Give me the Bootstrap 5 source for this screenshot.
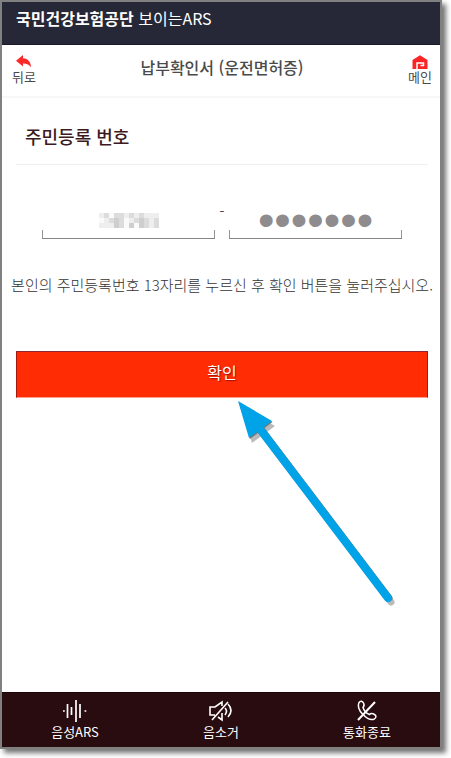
<!DOCTYPE html>
<html lang="ko">
<head>
<meta charset="utf-8">
<meta name="viewport" content="width=device-width, initial-scale=1">
<title>국민건강보험공단 보이는ARS</title>
<link href="https://cdn.jsdelivr.net/npm/bootstrap@5.3.0/dist/css/bootstrap.min.css" rel="stylesheet">
<style>
body{font-family:"Noto Sans CJK KR",sans-serif;background:#fff;color:#444;padding:0 9px 9px 0}
.phone{min-height:calc(100vh - 9px);border:2px solid #808080;background:#fff;box-shadow:4px 4px 5px rgba(0,0,0,.55)}
.top-bar{background:#262837;border-bottom:1px solid #191a27;height:43px;padding:3px 14px 0;font-size:16px;line-height:26px;color:#fff}
.top-bar strong{font-weight:700}
.title-bar{height:53px;border-bottom:2px solid #f7f7f7;padding:9px 8px 0 10px}
.title-bar h1{font-size:16px;line-height:26px;font-weight:500;color:#4a4a4a}
.side-link{font-size:13px;line-height:15px;color:#4a4a4a;font-weight:400}
.side-link svg{margin-top:1px}
.content{padding:0 12px 0 14px}
.section-head{height:67px;padding:25px 9px 0;border-bottom:1px solid #f0eeee;font-size:18px;line-height:26px;font-weight:500;color:#3c1a20}
.id-row{padding:36px 26px 0;gap:4px}
.id-field{height:38px;min-width:0;width:100%;border:0;border-bottom:1px solid #858585;border-radius:0;padding:0;text-align:center;color:#8f8c90;font-family:"Liberation Sans",sans-serif;
background:linear-gradient(#969696,#969696) left bottom/1px 8px no-repeat,linear-gradient(#969696,#969696) right bottom/1px 8px no-repeat}
.id-field.secret{font-size:47px;line-height:36px}
.id-field:focus{outline:0}
.dash{font-size:14px;line-height:20px;width:6px;text-align:center}
.hidden-digits{position:absolute;left:50%;top:12px;margin-left:-30px}
.guide{font-size:15px;line-height:24px;font-weight:300;color:#333;margin:34px -10px 0;text-align:center}
.confirm{height:47px;margin-top:54px}
.confirm .btn{height:100%;border-radius:0;border:1px solid #a5180c;border-top-color:#8a2838;border-bottom-color:#ff9c8c;background:#ff2c04;color:#fff;font-size:16px;line-height:24px;padding:0 0 6px;text-shadow:1px 1px 1px rgba(120,0,0,.7)}
.pointer{position:absolute;left:50%;top:100%;margin-left:12px;pointer-events:none}
.foot-bar{height:55px;background:#290c10;border-top:1px solid #1a0407}
.foot-bar .btn{border:0;border-radius:0;padding:0;color:#fff;font-size:13px;line-height:18px}
.foot-bar svg{display:block;margin:0 auto}
</style>
</head>
<body>
<div class="phone d-flex flex-column">
  <header>
    <div class="top-bar"><strong>국민건강보험공단</strong> 보이는ARS</div>
    <nav class="title-bar d-flex justify-content-between align-items-start">
      <a href="#" class="side-link d-flex flex-column align-items-center text-decoration-none">
        <svg width="16" height="14" viewBox="0 0 16 14" aria-hidden="true"><path d="M0 5.800 7 0v3.200c5 .2 8 3.800 8 9.300-1.500-2.600-4-3.900-8-3.900v3z" fill="#fb2a2a"/></svg>
        뒤로</a>
      <h1 class="mb-0">납부확인서 (운전면허증)</h1>
      <a href="#" class="side-link d-flex flex-column align-items-center text-decoration-none">
        <svg width="16" height="14" viewBox="0 0 16 14" aria-hidden="true"><path d="M.5 14V5L8 .3 15.500 5v9z" fill="#fb2525"/><path d="M5 14V8h6.500v2.500H8.500" fill="none" stroke="#fff" stroke-width="1.500"/></svg>
        메인</a>
    </nav>
  </header>
  <main class="content flex-grow-1">
    <h2 class="section-head mb-0">주민등록 번호</h2>
    <div class="id-row d-flex">
      <div class="col position-relative">
        <input type="text" class="id-field d-block" inputmode="numeric" aria-label="주민등록번호 앞 6자리">
        <svg class="hidden-digits" width="60" height="15" viewBox="0 0 12 3" shape-rendering="crispEdges" aria-hidden="true">
          <path fill="#eee" d="M0 0h12v3H0z"/>
          <path fill="#dcdcdc" d="M1 0h1v1H1zM3 0h2v1H3zM6 0h1v1H6zM8 0h1v1H8zM2 1h2v1H2zM4 1h1v2H4zM7 1h1v1H7zM9 1h1v1H9zM11 1h1v2h-1zM9 2h1v1H9z"/>
          <path fill="#cecece" d="M3 1h1v2H3zM8 1h1v1H8zM6 2h1v1H6zM8 2h1v1H8z"/>
          <path fill="#fafafa" d="M0 1h1v1H0zM2 0h1v1H2zM5 1h1v2H5zM7 2h1v1H7z"/>
        </svg>
      </div>
      <span class="dash">-</span>
      <div class="col">
        <input type="password" class="id-field secret d-block" value="0000000" maxlength="7" inputmode="numeric" aria-label="주민등록번호 뒤 7자리">
      </div>
    </div>
    <p class="guide">본인의 주민등록번호 13자리를 누르신 후 확인 버튼을 눌러주십시오.</p>
    <div class="confirm position-relative">
      <button type="button" class="btn w-100">확인</button>
      <svg class="pointer" width="164" height="210" viewBox="234 396 164 210" aria-hidden="true">
        <g transform="translate(3 4)" opacity=".4"><path d="M238 400 272 420 249 437z" fill="#555"/><path d="M260 428 388 596" stroke="#555" stroke-width="7" stroke-linecap="round"/></g>
        <path d="M239 400 272.500 420 250 437z" fill="#777"/><path d="M261 427 389 596" stroke="#777" stroke-width="7" stroke-linecap="round"/>
        <path d="M238 399 272 419 249 436z" fill="#00a2e8"/><path d="M260 427 388 596" stroke="#00a2e8" stroke-width="8" stroke-linecap="round"/>
      </svg>
    </div>
  </main>
  <footer class="foot-bar row g-0">
    <button type="button" class="btn col">
      <svg width="26" height="24" viewBox="0 0 26 24" fill="none" stroke="#fff" stroke-width="1.700" aria-hidden="true"><path d="M1 12h1.800M5.500 5v14M9.500 8v8M14 1v22M18 5v14M22.500 12h1.800"/></svg>
      음성ARS</button>
    <button type="button" class="btn col">
      <svg width="26" height="24" viewBox="0 0 26 24" fill="none" stroke="#fff" stroke-width="1.600" aria-hidden="true"><path d="M7 16H2V8h5l7-5v4M14 14v7l-4-3M4 21 20 3M17 9q3 3 0 7M20 5q6 6.500 0 13"/></svg>
      음소거</button>
    <button type="button" class="btn col">
      <svg width="26" height="24" viewBox="0 0 26 24" fill="none" stroke="#fff" stroke-width="1.500" aria-hidden="true"><path d="M5 3.500C6.500 1.500 8.500 2 9.500 4s1 3-.5 4.500c1 3.500 4 6 6.500 7 1.500-1.700 3-1.300 5 0s2 3-.5 4.700C14 22.500 1.500 11 5 3.500z"/><path d="M4 21 21 3" stroke-width="2"/></svg>
      통화종료</button>
  </footer>
</div>
<script src="https://cdn.jsdelivr.net/npm/bootstrap@5.3.0/dist/js/bootstrap.bundle.min.js"></script>
</body>
</html>
